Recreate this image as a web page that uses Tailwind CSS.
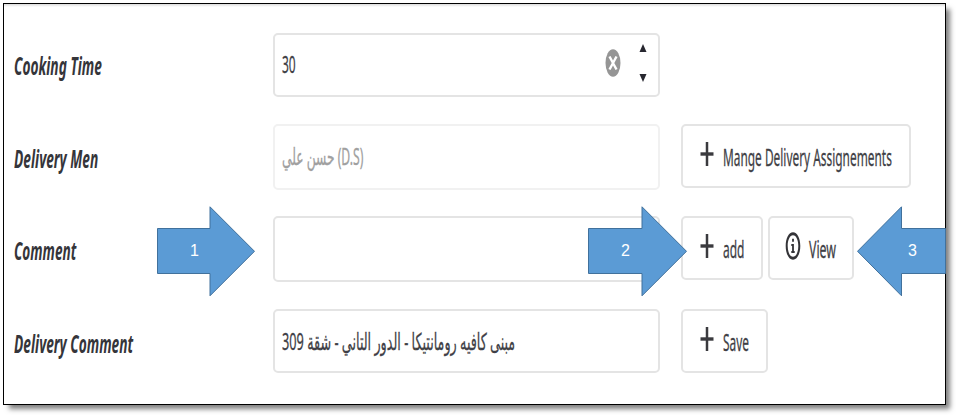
<!DOCTYPE html>
<html lang="en">
<head>
<meta charset="utf-8">
<title>Order details</title>
<script src="https://cdn.jsdelivr.net/npm/@tailwindcss/browser@4"></script>
</head>
<body class="bg-white">
<div class="relative w-[956px] h-[415px] overflow-hidden p-[3px] font-['Noto_Sans','DejaVu_Sans',sans-serif] text-[23.5px] leading-[34px] text-[#3f3f46]">
  <main class="w-[943px] h-[402px] border border-black bg-white shadow-[5px_5px_5px_-1px_rgba(0,0,0,0.5)] flex flex-col pt-[29px] pl-[10px]">
    <div class="flex h-[91px] items-start">
      <div class="w-[259px] h-[66px] flex items-center shrink-0"><label class="w-0 whitespace-nowrap font-bold italic text-[24.5px] text-[#35353a]"><span class="inline-block origin-left scale-x-[0.56]">Cooking Time</span></label></div>
      <div class="w-[387px] h-[64px] rounded-[5px] border-2 border-[#e4e4e4] flex items-center pl-[7px] pr-[10px]">
        <div class="w-[323px] pb-[2px] [-webkit-text-stroke:0.3px]"><span class="inline-block origin-left scale-x-[0.51]">30</span></div>
        <svg class="w-[16px] h-[28px] shrink-0 mb-[4px]" viewBox="0 0 16 28"><ellipse cx="8" cy="14" rx="7.5" ry="13.8" fill="#959595"/><path d="M4.500 7.500L11.500 20.500M11.500 7.500L4.500 20.500" stroke="#fff" stroke-width="2.4"/></svg>
        <svg class="w-[10px] h-[40px] ml-[17px] mb-[4px] shrink-0" viewBox="0 0 10 40"><path d="M5 1L8.500 9H1.500ZM5 39L1.500 31H8.500Z" fill="#27272f"/></svg>
      </div>
    </div>
    <div class="flex h-[92px] items-start">
      <div class="w-[259px] h-[69px] flex items-center shrink-0"><label class="w-0 whitespace-nowrap font-bold italic text-[24.5px] text-[#35353a]"><span class="inline-block origin-left scale-x-[0.56]">Delivery Men</span></label></div>
      <div class="w-[387px] h-[66px] rounded-[5px] border-2 border-[#f1f1f1] flex items-center pl-[7px] pb-[2px] text-[#a0a0a0]">
        <span class="w-0 whitespace-nowrap [-webkit-text-stroke:0.3px]"><span class="inline-block origin-left scale-x-[0.52]" dir="ltr">حسن علي (D.S)</span></span>
      </div>
      <button class="ml-[21px] w-[230px] h-[64px] rounded-[5px] border-2 border-[#e4e4e4] flex items-center pl-[17px]">
        <svg class="w-[14px] h-[26px] shrink-0 mb-[4px]" viewBox="0 0 14 26"><path d="M7 1V25" stroke="#3a3a3e" stroke-width="2.5"/><path d="M.5 13H13.500" stroke="#3a3a3e" stroke-width="3.4"/></svg>
        <span class="ml-[9px] pt-px w-0 whitespace-nowrap [-webkit-text-stroke:0.3px]"><span class="inline-block origin-left scale-x-[0.506]">Mange Delivery Assignements</span></span>
      </button>
    </div>
    <div class="flex h-[93px] items-start">
      <div class="w-[259px] h-[69px] flex items-center shrink-0"><label class="w-0 whitespace-nowrap font-bold italic text-[24.5px] text-[#35353a]"><span class="inline-block origin-left scale-x-[0.555]">Comment</span></label></div>
      <div class="w-[387px] h-[66px] rounded-[5px] border-2 border-[#e4e4e4]"></div>
      <button class="ml-[21px] w-[82px] h-[64px] rounded-[5px] border-2 border-[#e4e4e4] flex items-center pl-[17px]">
        <svg class="w-[14px] h-[26px] shrink-0 mb-[4px]" viewBox="0 0 14 26"><path d="M7 1V25" stroke="#3a3a3e" stroke-width="2.5"/><path d="M.5 13H13.500" stroke="#3a3a3e" stroke-width="3.4"/></svg>
        <span class="ml-[9px] pt-[2px] w-0 whitespace-nowrap [-webkit-text-stroke:0.3px]"><span class="inline-block origin-left scale-x-[0.51]">add</span></span>
      </button>
      <button class="ml-[5px] w-[86px] h-[64px] rounded-[5px] border-2 border-[#e4e4e4] flex items-center pl-[14.500px]">
        <svg class="w-[16px] h-[28px] shrink-0 mb-[4px]" viewBox="0 0 16 28"><path d="M8 .3C12.200.3 15.300 6.400 15.300 14S12.200 27.700 8 27.700.7 21.600.7 14 3.800.3 8 .3ZM8 3.200C4.800 3.200 2.700 8 2.700 14S4.800 24.800 8 24.800 13.300 20 13.300 14 11.200 3.200 8 3.200Z" fill="#343438" fill-rule="evenodd"/><path d="M7.100 6.800H8.900V9.800H7.100ZM6.300 12H8.900V19H9.700V21H6.300V19H7.100V14H6.300Z" fill="#343438"/></svg>
        <span class="ml-[8.500px] pt-[2px] w-0 whitespace-nowrap [-webkit-text-stroke:0.3px]"><span class="inline-block origin-left scale-x-[0.525]">View</span></span>
      </button>
    </div>
    <div class="flex items-start">
      <div class="w-[259px] h-[69px] flex items-center shrink-0"><label class="w-0 whitespace-nowrap font-bold italic text-[24.5px] text-[#35353a]"><span class="inline-block origin-left scale-x-[0.56]">Delivery Comment</span></label></div>
      <div class="w-[387px] h-[64px] rounded-[5px] border-2 border-[#e4e4e4] flex items-center pl-[7px]">
        <span class="w-0 whitespace-nowrap [-webkit-text-stroke:0.3px]"><span class="inline-block origin-left scale-x-[0.542]" dir="rtl">مبنى كافيه رومانتيكا - الدور التاني - شقة 309</span></span>
      </div>
      <button class="ml-[21px] w-[87px] h-[64px] rounded-[5px] border-2 border-[#e4e4e4] flex items-center pl-[17px]">
        <svg class="w-[14px] h-[26px] shrink-0 mb-[4px]" viewBox="0 0 14 26"><path d="M7 1V25" stroke="#3a3a3e" stroke-width="2.5"/><path d="M.5 13H13.500" stroke="#3a3a3e" stroke-width="3.4"/></svg>
        <span class="ml-[9px] pt-px w-0 whitespace-nowrap [-webkit-text-stroke:0.3px]"><span class="inline-block origin-left scale-x-[0.506]">Save</span></span>
      </button>
    </div>
  </main>
  <div class="absolute left-[4px] top-[4px] w-[941px] h-[3px] bg-linear-to-b from-[#dcdcdc] to-white"></div>

  <div class="absolute left-[157px] top-[206px] w-[98px] h-[91px] font-['Liberation_Sans',Arial,sans-serif] text-[16px] leading-[18px] text-white">
    <svg class="absolute inset-0" width="98" height="91"><path d="M.5 22.500H53V.8L97.500 45.300 53 89.800V67.500H.5Z" fill="#5b9bd5" stroke="#41719c"/></svg>
    <span class="absolute left-[33px] top-[36px]">1</span>
  </div>
  <div class="absolute left-[588px] top-[206px] w-[99px] h-[91px] font-['Liberation_Sans',Arial,sans-serif] text-[16px] leading-[18px] text-white">
    <svg class="absolute inset-0" width="99" height="91"><path d="M.5 22.500H54V.8L98.500 45.300 54 89.800V67.500H.5Z" fill="#5b9bd5" stroke="#41719c"/></svg>
    <span class="absolute left-[33px] top-[36px]">2</span>
  </div>
  <div class="absolute left-[857px] top-[206px] w-[89px] h-[91px] font-['Liberation_Sans',Arial,sans-serif] text-[16px] leading-[18px] text-white">
    <svg class="absolute inset-0" width="89" height="91"><path d="M88.500 22.500H44.500V.8L.5 45.300 44.500 89.800V67.500H88.500Z" fill="#5b9bd5" stroke="#41719c"/></svg>
    <span class="absolute left-[51px] top-[36px]">3</span>
  </div>
</div>
</body>
</html>
